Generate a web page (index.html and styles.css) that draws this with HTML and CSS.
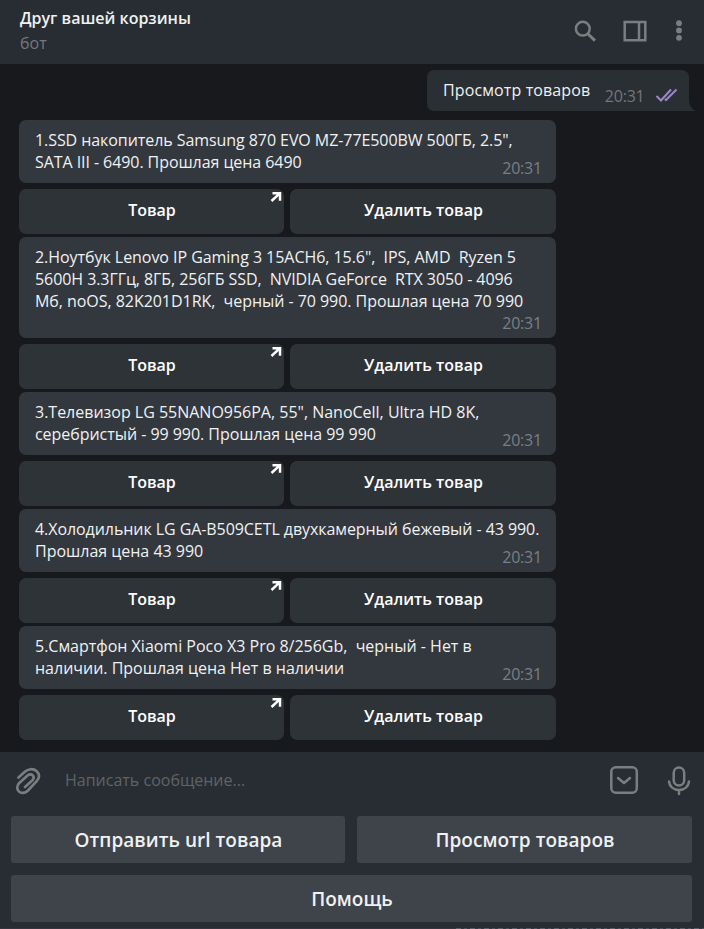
FILE: index.html
```html
<!DOCTYPE html>
<html lang="ru">
<head>
<meta charset="utf-8">
<title>Друг вашей корзины</title>
<link rel="stylesheet" href="styles.css">
</head>
<body>
<div class="app">
  <header class="header">
    <div class="peer">
      <div class="peer-name">Друг вашей корзины</div>
      <div class="peer-status">бот</div>
    </div>
    <svg class="header-icons" width="120" height="30" viewBox="0 0 120 30" fill="none" stroke="#7b7e81" stroke-width="2.5">
      <circle cx="12.8" cy="13.7" r="6.9"/><path d="M18 19l7 6.6" stroke-width="3"/>
      <path d="M54.7 7h20.600v18.200h-20.600z M69 7v18.200"/>
      <g fill="#7b7e81" stroke="none"><circle cx="109" cy="8.200" r="2.900"/><circle cx="109" cy="15.500" r="2.900"/><circle cx="109" cy="22.800" r="2.900"/></g>
    </svg>
  </header>

  <main class="chat">
    <div class="outgoing">
      <span class="outgoing-text">Просмотр товаров</span>
      <span class="outgoing-time">20:31</span>
      <svg class="checks" width="24" height="16" viewBox="0 0 24 16" fill="none" stroke="#9a86c9" stroke-width="2.100"><path d="M1.500 9l4.500 4.500L16 2.500M10.500 13.500L21.500 2.500M10 12l1.500 1.500"/></svg>
      <svg class="tail" width="7" height="12" viewBox="0 0 7 12"><path d="M0 0C0 6 2 9.500 7 12H0z" fill="#2a2f33"/></svg>
    </div>

    <section class="item">
      <div class="bubble"><p class="text"><span class="line snug">1.SSD накопитель Samsung 870 EVO MZ-77E500BW 500ГБ, 2.5",</span><span class="line snug">SATA III - 6490. Прошлая цена 6490</span></p><time class="time">20:31</time></div>
      <div class="actions"><div class="action">Товар<svg class="arrow" width="12" height="12" viewBox="0 0 12 12"><path d="M2.500 2.200H10v7.500M10 2.200L1.500 10" fill="none" stroke="#fff" stroke-width="2.500"/></svg></div><div class="action">Удалить товар</div></div>
    </section>
    <section class="item">
      <div class="bubble bubble-tall"><p class="text"><span class="line close">2.Ноутбук Lenovo IP Gaming 3 15ACH6, 15.6",  IPS, AMD  Ryzen 5</span><span class="line snug">5600H 3.3ГГц, 8ГБ, 256ГБ SSD,  NVIDIA GeForce  RTX 3050 - 4096</span><span class="line close">Мб, noOS, 82K201D1RK,  черный - 70 990. Прошлая цена 70 990</span></p><time class="time">20:31</time></div>
      <div class="actions"><div class="action">Товар<svg class="arrow" width="12" height="12" viewBox="0 0 12 12"><path d="M2.500 2.200H10v7.500M10 2.200L1.500 10" fill="none" stroke="#fff" stroke-width="2.500"/></svg></div><div class="action">Удалить товар</div></div>
    </section>
    <section class="item">
      <div class="bubble"><p class="text"><span class="line">3.Телевизор LG 55NANO956PA, 55", NanoCell, Ultra HD 8K,</span><span class="line close">серебристый - 99 990. Прошлая цена 99 990</span></p><time class="time">20:31</time></div>
      <div class="actions"><div class="action">Товар<svg class="arrow" width="12" height="12" viewBox="0 0 12 12"><path d="M2.500 2.200H10v7.500M10 2.200L1.500 10" fill="none" stroke="#fff" stroke-width="2.500"/></svg></div><div class="action">Удалить товар</div></div>
    </section>
    <section class="item">
      <div class="bubble"><p class="text"><span class="line snug">4.Холодильник LG GA-B509CETL двухкамерный бежевый - 43 990.</span><span class="line">Прошлая цена 43 990</span></p><time class="time">20:31</time></div>
      <div class="actions"><div class="action">Товар<svg class="arrow" width="12" height="12" viewBox="0 0 12 12"><path d="M2.500 2.200H10v7.500M10 2.200L1.500 10" fill="none" stroke="#fff" stroke-width="2.500"/></svg></div><div class="action">Удалить товар</div></div>
    </section>
    <section class="item">
      <div class="bubble"><p class="text"><span class="line">5.Смартфон Xiaomi Poco X3 Pro 8/256Gb,  черный - Нет в</span><span class="line">наличии. Прошлая цена Нет в наличии</span></p><time class="time">20:31</time></div>
      <div class="actions"><div class="action">Товар<svg class="arrow" width="12" height="12" viewBox="0 0 12 12"><path d="M2.500 2.200H10v7.500M10 2.200L1.500 10" fill="none" stroke="#fff" stroke-width="2.500"/></svg></div><div class="action">Удалить товар</div></div>
    </section>
  </main>

  <footer class="footer">
    <div class="composer">
      <svg class="clip" width="28" height="30" viewBox="0 0 28 30" fill="none" stroke="#7b7e81" stroke-width="2.600" stroke-linecap="round" stroke-linejoin="round"><path d="M3.500 10.500L9.500 5C13 1.500 18.500 1.300 21.500 4C25 7.200 24.500 11 21.500 14.300L13 23.500C10 26.500 6 26.500 3.800 24.300C1.500 22 1.800 18.500 4.300 16L12 9C14 7 16.500 7 17.700 8.300C19 9.700 18.800 11.800 17.200 13.500L10 20"/></svg>
      <div class="placeholder">Написать сообщение...</div>
      <svg class="composer-icons" width="84" height="32" viewBox="0 0 84 32" fill="none" stroke="#7b7e81" stroke-width="2.500" stroke-linecap="round" stroke-linejoin="round"><rect x="1.300" y="3.300" width="25.500" height="25.500" rx="4.500"/><path d="M8 14l6 5 6-5"/><rect x="63.700" y="3.500" width="10.500" height="18" rx="5.250"/><path d="M59 17.500c.6 5 4.500 8.500 10 8.500s9.400-3.500 10-8.500M69 26v4"/></svg>
    </div>
    <div class="keyboard">
      <div class="key">Отправить url товара</div>
      <div class="key">Просмотр товаров</div>
      <div class="key key-wide">Помощь</div>
    </div>
    <div class="edge"></div>
  </footer>
</div>
</body>
</html>
```
FILE: styles.css
```css
* { box-sizing: border-box; }
body {
  margin: 0;
  background: #18191d;
  font-family: "Open Sans", "Noto Sans", sans-serif;
  font-size: 16px;
  color: #f0f1f2;
}
.app { height: 929px; display: flex; flex-direction: column; overflow: hidden; }
.header {
  height: 64px;
  background: #282d33;
  display: flex;
  justify-content: space-between;
  padding: 7px 10px 0 20px;
}
.peer-name { font-weight: 600; line-height: 22px; }
.peer-status { color: #74787e; line-height: 22px; margin-top: 3px; }
.header-icons { margin-top: 8px; margin-right: 4px; }
.chat { flex: 1; padding: 6px 0 0 19px; display: flex; flex-direction: column; }
.outgoing {
  position: relative;
  align-self: flex-end;
  width: 262px;
  height: 41px;
  margin: 0 15px 9px 0;
  padding: 9px 10px 0 16px;
  display: flex;
  justify-content: space-between;
  background: #2a2f33;
  border-radius: 7px 7px 0 7px;
  line-height: 22px;
}
.outgoing-text { letter-spacing: 0.12px; }
.outgoing-time { color: #73767a; margin: 6px 0 0 4px; letter-spacing: -0.2px; }
.checks { margin-top: 8px; }
.tail { position: absolute; right: -7px; bottom: 0; }
.item { width: 537px; margin-bottom: 3px; }
.bubble {
  height: 63px;
  padding: 9px 15px 0 16px;
  background: #33383e;
  border-radius: 7px;
  position: relative;
}
.bubble-tall { height: 101px; }
.text { margin: 0; line-height: 22px; }
.line { display: block; width: max-content; white-space: pre; letter-spacing: -0.01px; }
.close { letter-spacing: -0.045px; }
.snug { letter-spacing: -0.07px; }
.time { position: absolute; right: 14px; bottom: 4px; line-height: 22px; color: #7b7e84; letter-spacing: -0.2px; }
.actions { display: grid; grid-template-columns: 265px 266px; gap: 6px; margin-top: 6px; }
.action {
  position: relative;
  height: 45px;
  line-height: 43px;
  text-align: center;
  font-weight: 600;
  padding-left: 1px;
  background: #2e3338;
  border-radius: 7px;
  color: #fff;
}
.arrow { position: absolute; right: 2px; top: 2px; }
.footer { height: 177px; background: #282d33; }
.composer { height: 64px; display: flex; align-items: flex-start; padding: 13px 8px 0 15px; }
.clip { margin-top: 2px; }
.placeholder { flex: 1; padding: 4px 0 0 22px; line-height: 22px; color: #5f6368; }
.composer-icons { margin-top: -1px; margin-right: 2px; }
.keyboard { display: grid; grid-template-columns: 334px 335px; gap: 12px; padding-left: 11px; }
.key {
  height: 47px;
  line-height: 49px;
  border-radius: 3px;
  background: #3e444a;
  text-align: center;
  font-size: 19px;
  font-weight: 600;
  letter-spacing: 0.03px;
  padding-left: 1px;
}
.key-wide { grid-column: 1 / 3; }
.edge {
  height: 1px;
  margin-top: 6px;
  background:
    repeating-linear-gradient(90deg, #585c66 0 5px, #34353e 5px 8px, #4c505a 8px 11px, #34353e 11px 14px) right / 248px 1px no-repeat,
    #34353e;
}
```
